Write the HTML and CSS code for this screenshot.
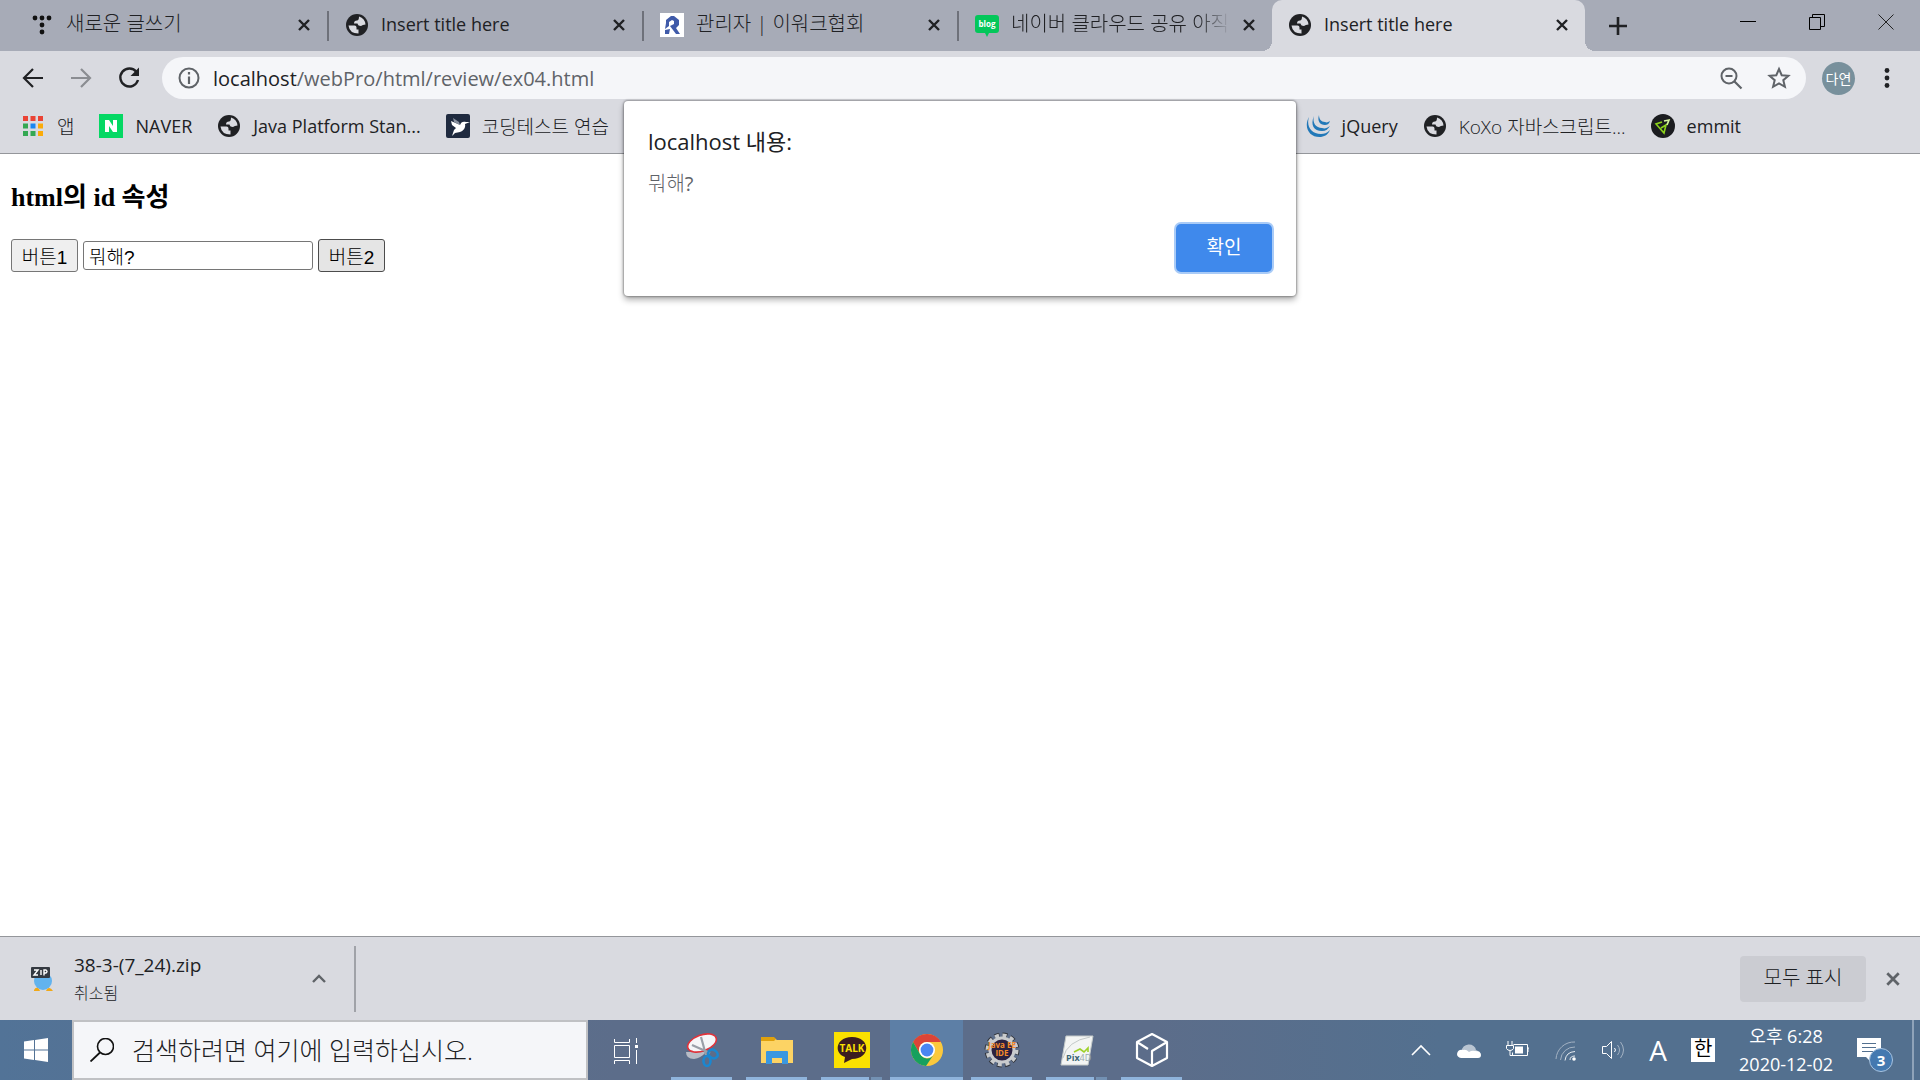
FILE: index.html
```html
<!DOCTYPE html>
<html lang="ko">

<head>
  <meta charset="utf-8">
  <title>Insert title here</title>
  <meta name="viewport" content="width=device-width, initial-scale=1">
  <link rel="stylesheet" href="styles.css">
</head>

<body>
  <!-- shared symbols -->
  <svg class="defs" aria-hidden="true">
    <symbol id="globe" viewBox="0 0 24 24">
      <circle cx="12" cy="12" r="11" fill="#202124"/>
      <path d="M3.500 12.500h6q2 0 2 2v2h2v4q-9 0-10-8zM14 3.500q6 2 6.500 8-3 0-4.500 1.500-3 0-3.500-2.500H9q0-3 3-3 2 0 2-4z" fill="#d9dae0"/>
    </symbol>
    <symbol id="cross" viewBox="0 0 14 14">
      <path d="M2 2l10 10M12 2L2 12" stroke="currentColor" stroke-width="2.400" fill="none"/>
    </symbol>
  </svg>

  <header>
    <div class="tabs">
      <div class="tab">
        <svg class="icon" viewBox="0 0 24 24"><g fill="#111"><circle cx="5" cy="5" r="2.400"/><circle cx="12" cy="5" r="2.400"/><circle cx="19" cy="5" r="2.400"/><circle cx="12" cy="12" r="2.400"/><circle cx="12" cy="19" r="2.400"/></g></svg>
        <span class="ko">새로운 글쓰기</span>
        <button type="button" aria-label="탭 닫기"><svg><use href="#cross"/></svg></button>
      </div>
      <div class="tab">
        <svg class="icon"><use href="#globe"/></svg>
        <span>Insert title here</span>
        <button type="button" aria-label="탭 닫기"><svg><use href="#cross"/></svg></button>
      </div>
      <div class="tab">
        <svg class="icon" viewBox="0 0 24 24"><path fill="#fff" d="M0 0h24v24H0z"/><path d="M6 10V7l5-4h3l5 4v5l-3 3 4 6h-4l-6-8 4-2V8l-2-1-3 2v4l-4 3zM5 17l5-1-1 5H5z" fill="#3f5aa9"/></svg>
        <span class="ko">관리자 | 이워크협회</span>
        <button type="button" aria-label="탭 닫기"><svg><use href="#cross"/></svg></button>
      </div>
      <div class="tab last">
        <svg class="icon" viewBox="0 0 24 24"><path d="M3 2h18q3 0 3 3v12q0 3-3 3h-7l-2 4-2-4H3q-3 0-3-3V5q0-3 3-3z" fill="#03c75a"/><text class="blog" x="12" y="14" text-anchor="middle">blog</text></svg>
        <span class="ko fade">네이버 클라우드 공유 아직</span>
        <button type="button" aria-label="탭 닫기"><svg><use href="#cross"/></svg></button>
      </div>
      <div class="tab active">
        <svg class="icon"><use href="#globe"/></svg>
        <span>Insert title here</span>
        <button type="button" aria-label="탭 닫기"><svg><use href="#cross"/></svg></button>
      </div>
      <button type="button" class="new_tab" aria-label="새 탭"><svg viewBox="0 0 18 18"><path d="M9 0v18M0 9h18" stroke="#202124" stroke-width="2.600"/></svg></button>
      <div class="window_buttons">
        <button type="button" aria-label="최소화"><svg viewBox="0 0 16 16"><path d="M0 7.500h16" stroke="#000"/></svg></button>
        <button type="button" aria-label="이전 크기로 복원"><svg viewBox="0 0 16 16"><path d="M.5 3.500h11v12H.5zM3.500 3.500v-3h12v12h-4" stroke="#000" fill="none"/></svg></button>
        <button type="button" aria-label="닫기"><svg viewBox="0 0 16 16"><path d="M.5.5l15 15M15.500.5l-15 15" stroke="#222"/></svg></button>
      </div>
    </div>

    <div class="toolbar">
      <button type="button" aria-label="뒤로"><svg viewBox="0 0 24 24"><path d="M22 12H4M12 3l-9 9 9 9" stroke="#202124" stroke-width="2.200" fill="none"/></svg></button>
      <button type="button" aria-label="앞으로"><svg viewBox="0 0 24 24"><path d="M2 12h18M12 3l9 9-9 9" stroke="#8b8d92" stroke-width="2.200" fill="none"/></svg></button>
      <button type="button" aria-label="새로고침"><svg viewBox="0 0 24 24"><path d="M19.500 6A9 9 0 1 0 21 14" stroke="#202124" stroke-width="2.400" fill="none"/><path d="M22 1.500V10h-8.500z" fill="#202124"/></svg></button>
      <div class="address">
        <svg viewBox="0 0 24 24"><circle cx="12" cy="12" r="9.500" stroke="#5f6368" stroke-width="2" fill="none"/><path d="M12 6v2.500M12 10.500V18" stroke="#5f6368" stroke-width="2.200"/></svg>
        <p><b>localhost</b>/webPro/html/review/ex04.html</p>
        <button type="button" aria-label="축소"><svg viewBox="0 0 24 24"><circle cx="10" cy="10" r="7.500" stroke="#5f6368" stroke-width="2" fill="none"/><path d="M6.500 10h7M15.500 15.500l7 7" stroke="#5f6368" stroke-width="2.200"/></svg></button>
        <button type="button" aria-label="북마크에 추가"><svg viewBox="0 0 24 24"><path d="M12 3l2.700 6.200 6.700.6-5.100 4.400 1.600 6.600L12 17.300l-5.900 3.500 1.600-6.600-5.100-4.400 6.700-.6z" stroke="#5f6368" stroke-width="2" fill="none"/></svg></button>
      </div>
      <button type="button" class="avatar">다연</button>
      <button type="button" aria-label="메뉴"><svg viewBox="0 0 24 24"><g fill="#202124"><circle cx="12" cy="4.500" r="2.400"/><circle cx="12" cy="12" r="2.400"/><circle cx="12" cy="19.500" r="2.400"/></g></svg></button>
    </div>

    <nav class="bookmarks">
      <div class="group left">
        <a href="#" class="ko"><svg class="icon" viewBox="0 0 24 24"><path d="M2 2h5v5H2zM9.500 2h5v5h-5zM17 2h5v5h-5z" fill="#ea4335"/><path d="M2 9.500h5v5H2zM2 17h5v5H2zM9.500 17h5v5h-5z" fill="#34a853"/><path d="M9.500 9.500h5v5h-5z" fill="#1a86f0"/><path d="M17 9.500h5v5h-5zM17 17h5v5h-5z" fill="#fbab09"/></svg>앱</a>
        <a href="#"><svg class="icon" viewBox="0 0 24 24"><path d="M0 0h24v24H0z" fill="#05d864"/><path d="M6 18V6h4l4 6V6h4v12h-4l-4-6v6z" fill="#fff"/></svg>NAVER</a>
        <a href="#"><svg class="icon"><use href="#globe"/></svg>Java Platform Stan...</a>
        <a href="#" class="ko"><svg class="icon" viewBox="0 0 24 24"><rect width="24" height="24" rx="2" fill="#1f2a3f"/><path d="M7 4l6 4 1 3-6-3z" fill="#8b93a1"/><path d="M5 7l9 4c1-3 3-4 6-3l4 0-5 2c1 4-2 7-5 8l-5 1-3 3 2-6 2-2-4-3z" fill="#fff"/></svg>코딩테스트 연습</a>
      </div>
      <div class="group">
        <a href="#"><svg class="icon" viewBox="0 0 24 24"><g fill="#2178b8"><path d="M3 3c-6 11 1 21 12 20 5-1 7-3 9-7-3 3-6 4-9 4C5 20 0 12 3 3z"/><path d="M8 2c-4 9 0 15 8 15 4 0 6-2 8-5-3 2-5 3-8 2C10 14 6 9 8 2z"/><path d="M13 1c-2 6 1 10 6 10 2 0 4-1 5-4-2 1-3 2-5 1-4 0-6-3-6-7z"/></g></svg>jQuery</a>
        <a href="#" class="ko"><svg class="icon"><use href="#globe"/></svg>KoXo 자바스크립트...</a>
        <a href="#"><svg class="icon" viewBox="0 0 24 24"><circle cx="12" cy="12" r="12" fill="#1b1c20"/><path d="M11 8l-6 2 8 9 2-8-5 3" stroke="#8bd21c" stroke-width="1.600" fill="none"/><path d="M13 7l5-1-2 5" stroke="#d6f5a0" stroke-width="1.600" fill="none"/></svg>emmit</a>
      </div>
    </nav>

    <div class="alert" role="dialog" aria-labelledby="alert_title">
      <h2 id="alert_title">localhost 내용:</h2>
      <p>뭐해?</p>
      <button type="button">확인</button>
    </div>
  </header>

  <main>
    <h3>html의 id 속성</h3>
    <form>
      <button type="button" id="btn1">버튼1</button>
      <input type="text" id="text" value="뭐해?" aria-label="내용">
      <button type="button" id="btn2">버튼2</button>
    </form>
  </main>

  <section class="downloads">
    <div class="download">
      <svg class="icon" viewBox="0 0 24 24"><ellipse cx="13" cy="14" rx="9" ry="9" fill="#62b3ee"/><path d="M4 23q2-4 5-1l1 2H4zM16 24l1-2q3-3 6 2z" fill="#f0a818"/><rect x="1" width="19" height="11" rx="1" fill="#343941"/><path d="M4 3h4l-4 5h4M11 3v5M14 8.500V3h2q2 1.500 0 3h-2" stroke="#fff" stroke-width="1.400" fill="none"/></svg>
      <p>38-3-(7_24).zip<small>취소됨</small></p>
      <button type="button" aria-label="옵션"><svg viewBox="0 0 14 14"><path d="M1 10l6-6 6 6" stroke="#5f6368" stroke-width="2.400" fill="none"/></svg></button>
    </div>
    <button type="button" class="show_all">모두 표시</button>
    <button type="button" class="close" aria-label="닫기"><svg><use href="#cross"/></svg></button>
  </section>

  <footer>
    <button type="button" class="start" aria-label="시작"><svg viewBox="0 0 24 24"><path d="M0 3.500L10 2v9.500H0zM11 1.900L24 0v11.500H11zM0 12.500h10V22L0 20.500zM11 12.500h13V24l-13-1.900z" fill="#fff"/></svg></button>
    <label class="search">
      <svg viewBox="0 0 24 24"><circle cx="15.500" cy="8.500" r="8" stroke="#111" stroke-width="1.600" fill="none"/><path d="M10 14.500L.5 23.500" stroke="#111" stroke-width="1.800"/></svg>
      <input type="text" placeholder="검색하려면 여기에 입력하십시오." aria-label="검색">
    </label>
    <div class="apps">
      <button type="button" class="app view" aria-label="작업 보기"><svg viewBox="0 0 36 36"><path d="M6.500 7v3.500h15V7M6.500 13.500h15v12h-15zM6.500 32v-3.500h15V32M28.500 6v5M28.500 18v14" stroke="#fff" fill="none"/><path d="M27 13h3v3h-3z" fill="#fff"/></svg></button>
      <button type="button" class="app open" aria-label="캡처 도구"><svg viewBox="0 0 36 36"><path d="M2 20q0 7 8 7 7-1 12-7z" fill="#b7bcc6"/><ellipse cx="18" cy="11" rx="15" ry="8" transform="rotate(-20 18 11)" fill="#f5f6f8" stroke="#e0333b" stroke-width="1.600"/><path d="M17 5l5 18M8 13l18 8" stroke="#9a9fa8" stroke-width="2.200"/><g fill="none" stroke="#1b87d0" stroke-width="2.600"><ellipse cx="29" cy="22" rx="5" ry="4" transform="rotate(35 29 22)"/><ellipse cx="23" cy="29" rx="3.500" ry="5"/></g></svg></button>
      <button type="button" class="app open" aria-label="파일 탐색기"><svg viewBox="0 0 36 36"><path d="M2 6h13l3 2h16v23H2z" fill="#fcd364"/><path d="M2 5h13l2 2-2 2H2z" fill="#e0a10c"/><path d="M7 32V20q0-1 1-1h20q1 0 1 1v12h-6v-6H13v6z" fill="#3a97e0"/></svg></button>
      <button type="button" class="app open many" aria-label="카카오톡"><svg viewBox="0 0 36 36"><path d="M0 0h36v36H0z" fill="#fae100"/><path d="M18 5c19 0 19 22 0 22l-8 4 1-6C-1 21 2 5 18 5z" fill="#3b1d20"/><text class="talk" x="18" y="20" text-anchor="middle">TALK</text></svg></button>
      <button type="button" class="app open current" aria-label="Chrome"><svg viewBox="0 0 36 36"><circle cx="18" cy="18" r="16" fill="#fbc93d"/><path d="M4.100 10A16 16 0 0 1 31.900 10H18a8 8 0 0 0-7 12z" fill="#dc4437"/><path d="M4.100 10A16 16 0 0 0 17 34l8-12q-4 6-9 4-3-1-5-4z" fill="#17a05e"/><circle cx="18" cy="18" r="8" fill="#fff"/><circle cx="18" cy="18" r="6.400" fill="#4a86f2"/></svg></button>
      <button type="button" class="app open" aria-label="Eclipse"><svg viewBox="0 0 36 36"><circle cx="18" cy="18" r="14.500" fill="none" stroke="#33363d" stroke-width="6" stroke-dasharray="4.600 3"/><circle cx="18" cy="18" r="14.500" fill="none" stroke="#c9cbcd" stroke-width="4" stroke-dasharray="4 3.600"/><circle cx="18" cy="18" r="12" fill="#2b2140" stroke="#c9cbcd" stroke-width="3"/><text class="ide" x="18" y="16" text-anchor="middle">Java EE</text><text class="ide" x="18" y="24" text-anchor="middle">IDE</text></svg></button>
      <button type="button" class="app open many" aria-label="Pix4D"><svg viewBox="0 0 36 36"><path d="M7 4h27l-5 29H2z" fill="#f3f5f4" stroke="#c4cac9"/><path d="M4 26Q8 9 31 5" stroke="#c4cac9" fill="none"/><path d="M15 20l6-3 4 3 4-4v4" stroke="#9ed12a" stroke-width="1.600" fill="none"/><text class="pix" x="7" y="29">Pix<tspan class="pale">4D</tspan></text></svg></button>
      <button type="button" class="app open" aria-label="3D 뷰어"><svg viewBox="0 0 36 36"><path d="M18 2l15 8v16l-15 8-15-8V10zM3 10l11 7M18 33V19l15-9" stroke="#fff" stroke-width="2.200" fill="none" stroke-linejoin="round"/></svg></button>
    </div>
    <div class="tray">
      <svg viewBox="0 0 24 24"><path d="M3 17l9-9 9 9" stroke="#fff" stroke-width="1.600" fill="none"/></svg>
      <svg viewBox="0 0 24 24"><path d="M5 13a7 6 0 0 1 14-1l4 2-2 3H3z" fill="#b9c5d2"/><path d="M4 20q-4-1-4-4 1-5 6-4 3-1 6 2 3-2 6-1 6 0 6 4 0 3-3 3z" fill="#fff"/></svg>
      <svg viewBox="0 0 24 24"><path d="M8.500 6.500h14v11h-15v-3M3 3v4M7 3v4M1.500 7.500h7v3q-1 2-3.500 2t-3.500-2zM5 12.500v5h3M22.500 10h1.500v4" stroke="#fff" fill="none"/><path d="M10 8.500h8v7h-8z" fill="#fff"/></svg>
      <svg viewBox="0 0 24 24"><g fill="none"><path d="M3 21A18 18 0 0 1 22 4M7.500 22A14 14 0 0 1 22 9" stroke="#a3b2c3"/><path d="M12 22.500Q13 14 22 13.500M17 22q0-4 5-4" stroke="#e8edf2"/></g><circle cx="21" cy="21" r="1.800" fill="#fff"/></svg>
      <svg viewBox="0 0 24 24"><path d="M1.500 8.500h4l5-5v17l-5-5h-4zM13.500 10q2 2 0 4" stroke="#fff" fill="none"/><path d="M16.500 7q4 5 0 10M19.500 4q6 8 0 16" stroke="#a3b2c3" fill="none"/></svg>
      <span class="latin">A</span>
      <span class="hangul">한</span>
      <p class="clock">오후 6:28<br>2020-12-02</p>
      <button type="button" class="notice" aria-label="알림"><svg viewBox="0 0 24 24"><path d="M0 0h24v19H14v5l-5-5H0z" fill="#fff"/><path d="M5 5.500h14M5 9.500h14M5 13.500h14" stroke="#53708f"/></svg><span>3</span></button>
    </div>
  </footer>
</body>

</html>
```
FILE: styles.css
```css
body {
  margin: 0;
  min-height: 100vh;
  display: flex;
  flex-direction: column;
  background: #fff;
  color: #202124;
  font-family: "Open Sans", "Noto Sans CJK KR", sans-serif;
  font-size: 18px;
}

p, h2 {
  margin: 0;
  font-weight: normal;
}

svg {
  display: block;
  flex: none;
}

button {
  border: 0;
  padding: 0;
  background: none;
  color: inherit;
  font-family: inherit;
  font-size: inherit;
}

.defs {
  position: absolute;
  width: 0;
  height: 0;
}

.icon {
  width: 24px;
  height: 24px;
}

/* hangul labels are set a bit larger and lighter */
.ko, .alert p, .show_all, .search input, .downloads small {
  font-family: "Open Sans", "Noto Sans CJK KR Light", "Noto Sans CJK KR", sans-serif;
  font-weight: 300;
}

header {
  position: relative;
  background: #d9dae0;
  border-bottom: 1px solid #94969b;
}

/* tabs */
.tabs {
  display: flex;
  align-items: center;
  height: 51px;
  padding-left: 14px;
  background: #a7abb7;
}

.tab {
  flex: 0 1 315px;
  min-width: 0;
  box-sizing: border-box;
  display: flex;
  align-items: center;
  gap: 12px;
  height: 30px;
  padding: 0 16px;
  border-right: 2px solid #6e717a;
}

.tab span {
  flex: 1;
  overflow: hidden;
  padding-bottom: 4px;
  white-space: nowrap;
  line-height: 28px;
}

.tab .ko {
  font-size: 20px;
}

.tab svg {
  margin-top: -1px;
}

.tab button svg {
  width: 14px;
  height: 14px;
}

.close svg {
  width: 16px;
  height: 16px;
}

.tab.last, .tab.active {
  flex-basis: 313px;
  border: 0;
}

.tab.active {
  position: relative;
  height: 51px;
  border-radius: 10px 10px 0 0;
  background: #d9dae0;
}

/* feet of the active tab */
.tab.active::before, .tab.active::after {
  content: "";
  position: absolute;
  bottom: 0;
  left: -10px;
  width: 10px;
  height: 10px;
  background: radial-gradient(circle at 0 0, #a7abb7 10px, #d9dae0 10px);
}

.tab.active::after {
  left: auto;
  right: -10px;
  background: radial-gradient(circle at 100% 0, #a7abb7 10px, #d9dae0 10px);
}

.fade {
  -webkit-mask-image: linear-gradient(90deg, #000 85%, transparent);
  mask-image: linear-gradient(90deg, #000 85%, transparent);
}

.blog {
  fill: #fff;
  font-size: 8px;
  font-weight: bold;
}

.new_tab {
  margin-left: 24px;
}

.new_tab svg {
  width: 18px;
  height: 18px;
}

.window_buttons {
  display: flex;
  gap: 53px;
  margin: 0 26px 8px auto;
}

.window_buttons svg {
  width: 16px;
  height: 16px;
}

/* address bar */
.toolbar {
  display: flex;
  align-items: center;
  gap: 24px;
  padding: 6px 21px 0;
}

.toolbar svg {
  width: 24px;
  height: 24px;
}

.address {
  flex: 1;
  display: flex;
  align-items: center;
  height: 42px;
  margin: 0 -8px 0 -3px;
  padding: 0 15px;
  gap: 24px;
  border-radius: 21px;
  background: #f5f6f9;
}

.address p {
  flex: 1;
  margin-left: -12px;
  color: #5f6368;
  font-size: 20px;
}

.address b {
  font-weight: normal;
  color: #202124;
}

.avatar {
  width: 33px;
  height: 33px;
  margin-right: -4px;
  border-radius: 50%;
  background: #78909c;
  color: #fff;
  font-size: 14px;
}

/* bookmarks */
.bookmarks {
  display: flex;
  height: 54px;
}

.group {
  display: flex;
  align-items: center;
  gap: 25px;
}

.group.left {
  box-sizing: border-box;
  width: 68%;
  padding-left: 21px;
}

.group a {
  display: flex;
  align-items: center;
  gap: 12px;
  color: #202124;
  text-decoration: none;
  white-space: nowrap;
}

.group .ko {
  font-size: 19px;
}

/* alert */
.alert {
  position: absolute;
  top: 101px;
  left: 50%;
  transform: translateX(-50%);
  box-sizing: border-box;
  width: 35%;
  padding: 24px;
  display: flex;
  flex-direction: column;
  border-radius: 4px;
  background: #fff;
  box-shadow: 0 0 2px 1px rgba(0,0,0,0.3), 0 4px 6px rgba(0,0,0,0.3);
}

.alert h2 {
  font-size: 22px;
  line-height: 32px;
}

.alert p {
  margin-top: 12px;
  color: #5f6368;
  font-size: 20px;
  font-weight: normal;
  line-height: 30px;
}

.alert button {
  align-self: flex-end;
  box-sizing: border-box;
  width: 96px;
  height: 48px;
  margin-top: 25px;
  padding-bottom: 4px;
  border-radius: 5px;
  background: #3f89ec;
  box-shadow: 0 0 0 2px #a9cbf7;
  color: #fff;
  font-size: 19px;
}

/* page */
main {
  flex: 1;
  padding: 0 11px;
}

h3 {
  margin: 26px 0 23px;
  font: bold 26px/36px "Liberation Serif", "Noto Sans CJK KR", serif;
  color: #000;
}

form {
  display: flex;
  align-items: center;
  gap: 5px;
}

form button, form input {
  box-sizing: border-box;
  border: 1px solid #767676;
  border-radius: 3px;
  color: #000;
  font: 300 19px "Liberation Sans", "Noto Sans CJK KR Light", "Noto Sans CJK KR", sans-serif;
}

form button {
  width: 67px;
  height: 33px;
  background: #efefef;
}

form input {
  width: 230px;
  height: 29px;
  padding: 0 5px;
}

#btn2 {
  border-color: #4c4c4c;
  background: #e5e5e5;
}

/* download shelf */
.downloads {
  display: flex;
  align-items: center;
  height: 83px;
  padding-right: 19px;
  border-top: 1px solid #94969b;
  background: #d9dae0;
}

.download {
  box-sizing: border-box;
  display: flex;
  align-items: center;
  gap: 20px;
  width: 356px;
  height: 66px;
  padding: 0 28px 0 30px;
  border-right: 2px solid #a0a2a8;
}

.download p {
  flex: 1;
  font-size: 19px;
  line-height: 28px;
}

.download small {
  display: block;
  font-size: 16px;
}

.download button svg {
  width: 14px;
  height: 14px;
}

.show_all {
  box-sizing: border-box;
  width: 126px;
  height: 46px;
  margin: 0 19px 0 auto;
  padding-bottom: 4px;
  border-radius: 4px;
  background: #cbccd2;
  font-size: 20px;
}

.close {
  color: #5f6368;
}

/* taskbar */
footer {
  display: flex;
  height: 60px;
  background: linear-gradient(90deg, #527397, #5c6d8a 32%, #5c6d8a 60%, #53708f 75%, #53708f);
  color: #fff;
}

.start {
  width: 72px;
}

.start svg {
  width: 24px;
  height: 24px;
  margin: auto;
}

.search {
  box-sizing: border-box;
  display: flex;
  align-items: center;
  gap: 18px;
  width: 516px;
  padding: 0 16px;
  border: 2px solid #c0c1c4;
  background: #f5f6f9;
}

.search svg {
  width: 24px;
  height: 24px;
}

.search input {
  flex: 1;
  border: 0;
  padding: 0;
  background: none;
  font-size: 25px;
}

.search input::placeholder {
  color: #202124;
}

.apps {
  display: flex;
  gap: 2px;
}

.app {
  position: relative;
  width: 73px;
}

.view {
  width: 75px;
}

.app svg {
  width: 36px;
  height: 36px;
  margin: auto;
}

.open::after {
  content: "";
  position: absolute;
  bottom: 0;
  left: 6px;
  right: 6px;
  height: 3px;
  background: #8fb4dc;
}

.many::after {
  background: linear-gradient(90deg, #8fb4dc 48px, #5c6d8a 48px, #5c6d8a 50px, #7391b3 50px);
}

.current {
  background: #5d7fa6;
}

.current::after {
  left: 0;
  right: 0;
}

.talk {
  fill: #fae100;
  font-size: 10px;
  font-weight: bold;
}

.ide {
  fill: #f58a2a;
  font-size: 8px;
  font-weight: bold;
}

.pix {
  fill: #3d6675;
  font-size: 9px;
  font-weight: bold;
}

.pale {
  fill: #9aa9ae;
  font-weight: normal;
}

.tray {
  display: flex;
  align-items: center;
  gap: 24px;
  margin-left: auto;
  padding-right: 31px;
  border-right: 2px solid #8fa3b9;
  margin-right: 6px;
}

.tray svg {
  width: 24px;
  height: 24px;
}

.latin {
  font-size: 28px;
}

.hangul {
  width: 24px;
  height: 24px;
  background: #fff;
  color: #000;
  font-size: 20px;
  line-height: 22px;
  text-align: center;
}

.clock {
  text-align: center;
  font-size: 18px;
  line-height: 28px;
}

.notice {
  position: relative;
}

.notice span {
  position: absolute;
  top: 10px;
  left: 12px;
  width: 22px;
  height: 22px;
  border: 1px solid #a9c4e0;
  border-radius: 50%;
  background: #4479b0;
  font-size: 15px;
  font-weight: bold;
  line-height: 22px;
}
```
